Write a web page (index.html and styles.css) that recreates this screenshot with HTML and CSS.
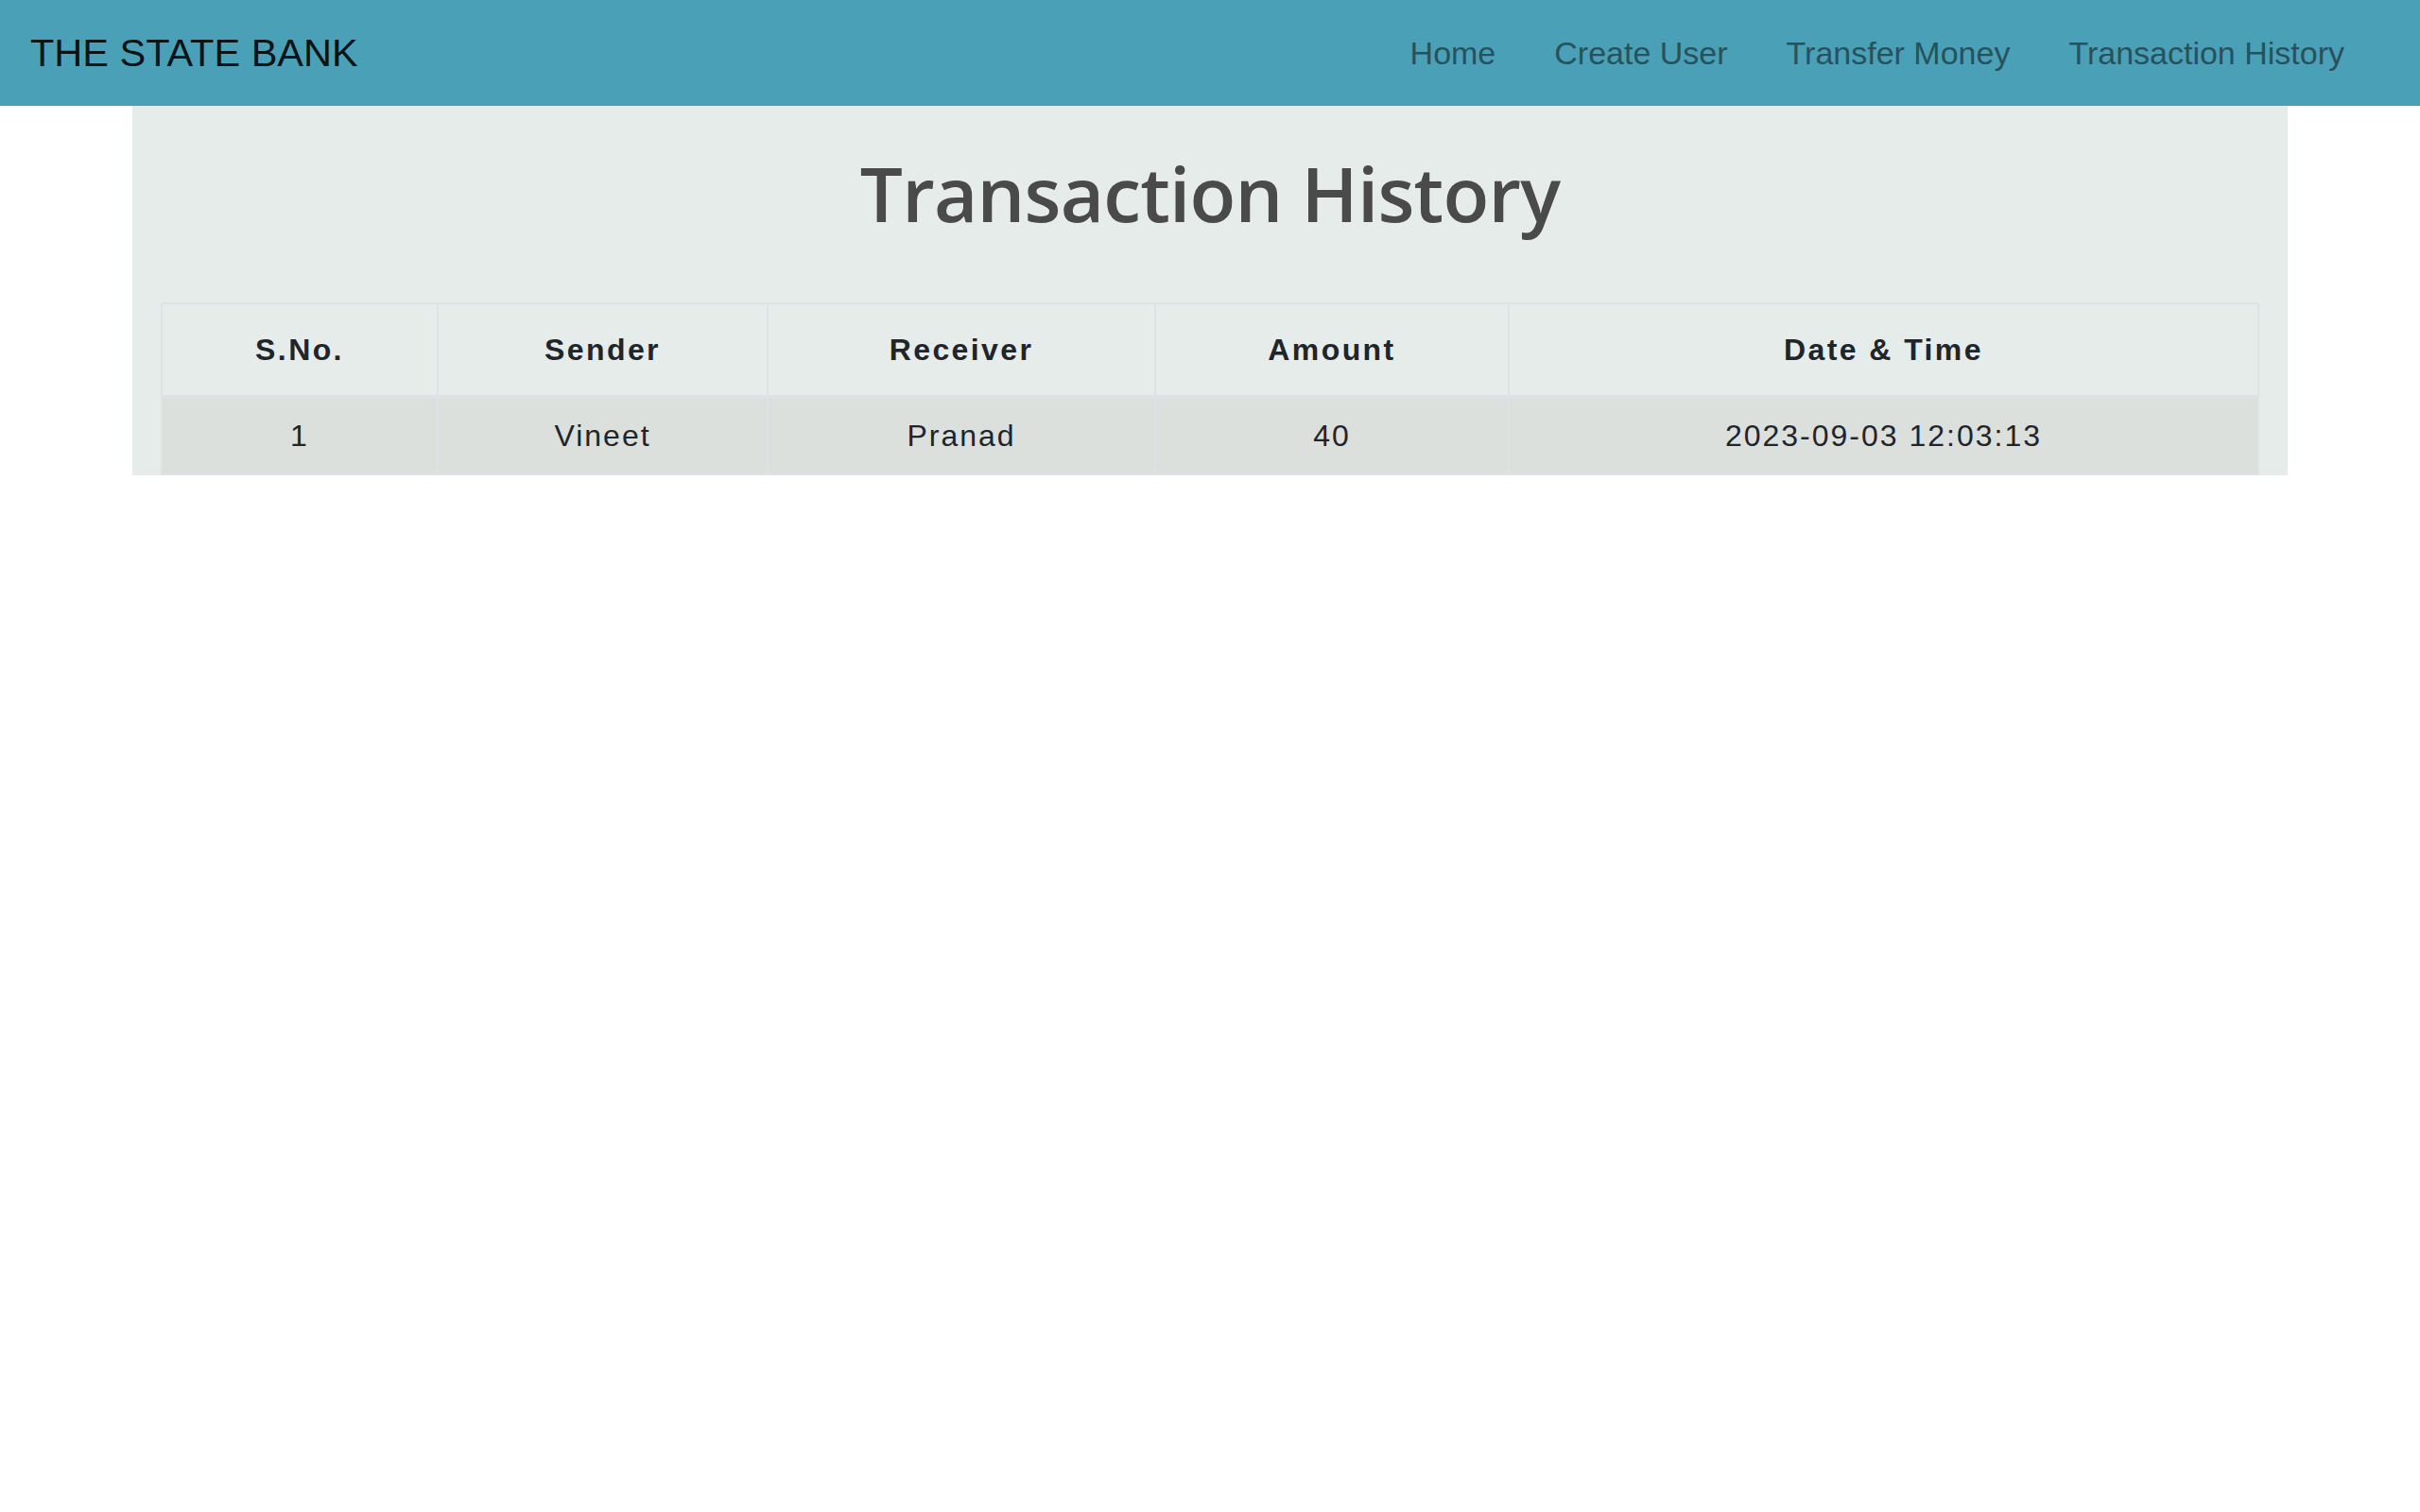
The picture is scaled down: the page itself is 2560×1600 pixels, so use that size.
FILE: index.html
```html
<!DOCTYPE html>
<html lang="en">
<head>
<meta charset="utf-8">
<title>Transaction History</title>
<link rel="stylesheet" href="styles.css">
</head>
<body>
<nav class="navbar">
  <a class="brand" href="#">THE STATE BANK</a>
  <ul class="nav-links">
    <li><a href="#">Home</a></li>
    <li><a href="#">Create User</a></li>
    <li><a href="#">Transfer Money</a></li>
    <li><a href="#">Transaction History</a></li>
  </ul>
</nav>
<main class="container">
  <h1 class="title">Transaction History</h1>
  <table class="history">
    <thead>
      <tr>
        <th class="c-sno">S.No.</th>
        <th class="c-sender">Sender</th>
        <th class="c-receiver">Receiver</th>
        <th class="c-amount">Amount</th>
        <th class="c-date">Date &amp; Time</th>
      </tr>
    </thead>
    <tbody>
      <tr>
        <td>1</td>
        <td>Vineet</td>
        <td>Pranad</td>
        <td>40</td>
        <td>2023-09-03 12:03:13</td>
      </tr>
    </tbody>
  </table>
</main>
</body>
</html>
```
FILE: styles.css
```css
* { box-sizing: border-box; }
html, body { margin: 0; padding: 0; background: #ffffff; }
body { font-family: "Liberation Sans", Arial, Helvetica, sans-serif; color: #212529; }

.navbar {
  height: 112px;
  background: #4aa0b6;
  display: flex;
  align-items: center;
  justify-content: space-between;
  padding: 0 80px 0 32px;
}
.brand {
  color: rgba(0, 0, 0, 0.9);
  text-decoration: none;
  font-size: 41.5px;
  line-height: 1;
}
.nav-links {
  list-style: none;
  margin: 0;
  padding: 0;
  display: flex;
  gap: 62px;
}
.nav-links a {
  color: #27525d;
  text-decoration: none;
  font-size: 34px;
  line-height: 1;
}

.container {
  width: 2280px;
  margin: 0 auto 0 140px;
  background: #e6ece9;
  padding: 44px 30px 0;
}
.title {
  margin: 0 0 68px;
  text-align: center;
  font-family: "Open Sans", sans-serif;
  font-weight: 600;
  font-size: 80px;
  letter-spacing: -0.8px;
  line-height: 1.2;
  color: #4a4a4a;
}
.history {
  width: 100%;
  border-collapse: collapse;
  font-size: 32px;
  text-align: center;
}
.history th, .history td {
  border: 2px solid #dee2e6;
}
.history th {
  font-weight: bold;
  letter-spacing: 2.4px;
  padding: 24px 0;
  line-height: 48px;
  border-bottom-width: 4px;
}
.history td {
  letter-spacing: 2px;
  padding: 15px 0 16px;
  line-height: 48px;
  background: #dbe0dd;
}
.c-sno { width: 292px; }
.c-sender { width: 349px; }
.c-receiver { width: 410px; }
.c-amount { width: 374px; }
.c-date { width: auto; }
```
